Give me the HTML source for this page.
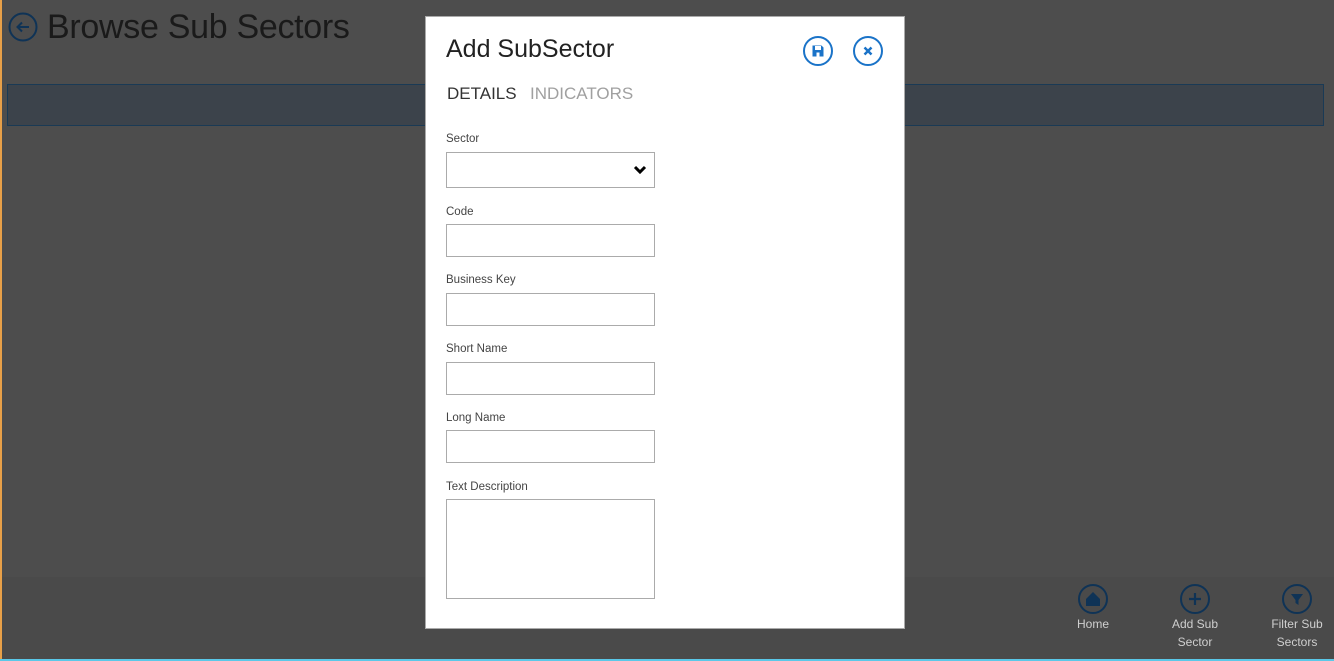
<!DOCTYPE html>
<html><head><style>
body{margin:0;width:1334px;height:661px;background:#4d4d4d;font-family:"Liberation Sans",sans-serif;position:relative;overflow:hidden}
.a{position:absolute}
.lbl{position:absolute;left:446px;font-size:11.5px;color:#444}
.in{position:absolute;left:446px;width:207px;border:1px solid #ababab;background:#fff}
.bt{position:absolute;font-size:12px;color:#cfcfcf;text-align:center;width:80px;line-height:18px}
</style></head><body>
<div class="a" style="left:0;top:0;width:2px;height:661px;background:#e8a048"></div>
<svg class="a" style="left:8px;top:12px" width="30" height="30"><circle cx="15" cy="15" r="13.5" fill="none" stroke="#0f3356" stroke-width="2"/><path d="M21 15H10M14 10.5L9.5 15L14 19.5" fill="none" stroke="#0f3356" stroke-width="2"/></svg>
<div class="a" style="left:47px;top:8px;font-size:34px;color:#1a1a1a;letter-spacing:-0.3px">Browse Sub Sectors</div>
<div class="a" style="left:7px;top:84px;width:1315px;height:40px;border:1px solid #1a3a55;background:#3c434b"></div>
<div class="a" style="left:2px;top:577px;width:1332px;height:82px;background:#4a4a4a"></div>
<div class="a" style="left:0;top:659px;width:1334px;height:2px;background:#5ac8e8"></div>
<svg class="a" style="left:1077px;top:583px" width="32" height="32"><circle cx="16" cy="16" r="14" fill="none" stroke="#0f3356" stroke-width="2"/><path d="M9 16L16 9L23 16V23H9Z" fill="#0f3356"/></svg>
<svg class="a" style="left:1179px;top:583px" width="32" height="32"><circle cx="16" cy="16" r="14" fill="none" stroke="#0f3356" stroke-width="2"/><path d="M16 10V22M10 16H22" stroke="#0f3356" stroke-width="2.2"/></svg>
<svg class="a" style="left:1281px;top:583px" width="32" height="32"><circle cx="16" cy="16" r="14" fill="none" stroke="#0f3356" stroke-width="2"/><path d="M10 11H22L17.5 17V22L14.5 20V17Z" fill="#0f3356"/></svg>
<div class="bt" style="left:1053px;top:615px">Home</div>
<div class="bt" style="left:1155px;top:615px">Add Sub<br>Sector</div>
<div class="bt" style="left:1257px;top:615px">Filter Sub<br>Sectors</div>
<div class="a" style="left:425px;top:16px;width:478px;height:611px;background:#fff;border:1px solid #aaa"></div>
<div class="a" style="left:446px;top:35px;font-size:25px;color:#222">Add SubSector</div>
<svg class="a" style="left:802px;top:35px" width="32" height="32"><circle cx="16" cy="16" r="14" fill="none" stroke="#1a73c8" stroke-width="2"/><path d="M10.5 10.5H19.5L21.5 12.5V21.5H10.5Z" fill="#1a73c8"/><rect x="13" y="11" width="6" height="4" fill="#fff"/><rect x="14.5" y="17.5" width="3" height="4" fill="#fff"/></svg>
<svg class="a" style="left:852px;top:35px" width="32" height="32"><circle cx="16" cy="16" r="14" fill="none" stroke="#1a73c8" stroke-width="2"/><path d="M12.5 12.5L19.5 19.5M19.5 12.5L12.5 19.5" stroke="#1a73c8" stroke-width="2.5"/></svg>
<div class="a" style="left:447px;top:84px;font-size:17px;color:#333">DETAILS</div>
<div class="a" style="left:530px;top:84px;font-size:17px;color:#a0a0a0">INDICATORS</div>
<div class="lbl" style="top:133px">Sector</div>
<div class="in" style="top:152px;height:34px"></div>
<svg class="a" style="left:633px;top:165px" width="14" height="10"><path d="M2 2L7 7L12 2" fill="none" stroke="#000" stroke-width="3"/></svg>
<div class="lbl" style="top:206px">Code</div>
<div class="in" style="top:224px;height:31px"></div>
<div class="lbl" style="top:274px">Business Key</div>
<div class="in" style="top:293px;height:31px"></div>
<div class="lbl" style="top:343px">Short Name</div>
<div class="in" style="top:362px;height:31px"></div>
<div class="lbl" style="top:412px">Long Name</div>
<div class="in" style="top:430px;height:31px"></div>
<div class="lbl" style="top:481px">Text Description</div>
<div class="in" style="top:499px;height:98px"></div>
</body></html>
